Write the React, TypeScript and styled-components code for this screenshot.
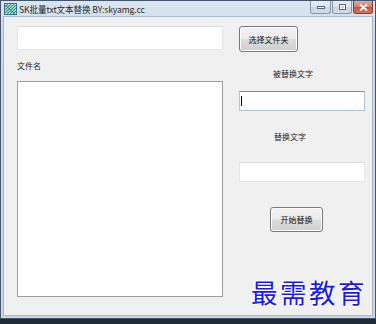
import React from "react";
import styled, { createGlobalStyle } from "styled-components";

const Global = createGlobalStyle`
  html, body { margin: 0; padding: 0; background: #1f2b38; }
  body { font-family: "Noto Sans CJK SC", "Liberation Sans", sans-serif; }
  * { box-sizing: border-box; }
`;

const Win = styled.div`
  width: 376px;
  height: 319px;
  border: 1px solid #46576b;
  background: linear-gradient(#dbe5f1, #cad8ea 40px, #c9d7e9);
  padding: 0 2px 2px 2px;
  display: flex;
  flex-direction: column;
`;

const TitleBar = styled.div`
  height: 15px;
  display: flex;
  align-items: center;
  gap: 2px;
`;

const TitleText = styled.span`
  font-size: 8.6px;
  color: #2a2a2a;
  white-space: nowrap;
  letter-spacing: -0.1px;
  flex: 1;
`;

const Caption = styled.div`
  display: flex;
  align-self: flex-start;
`;

const CapBtn = styled.div<{ $close?: boolean; $w: number }>`
  width: ${(p) => p.$w}px;
  height: 13px;
  border: 1px solid ${(p) => (p.$close ? "#8a3b2f" : "#8495aa")};
  border-top: none;
  border-radius: 0 0 3px 3px;
  background: ${(p) =>
    p.$close
      ? "linear-gradient(#e5a898, #d77a66 50%, #c4503a 51%, #d27a62)"
      : "linear-gradient(#e8eef5, #d9e2ed 50%, #c9d5e3 51%, #d3dde9)"};
  display: flex;
  align-items: center;
  justify-content: center;
  margin-left: 1px;
`;

const Client = styled.div`
  flex: 1;
  background: #f0f0f0;
  border: 1px solid #a9b9cc;
  position: relative;
  display: flex;
  padding: 9px 0 0 13px;
  gap: 16px;
`;

const LeftCol = styled.div`
  width: 206px;
  display: flex;
  flex-direction: column;
`;

const RightCol = styled.div`
  width: 126px;
  display: flex;
  flex-direction: column;
  align-items: flex-start;
`;

const Field = styled.div<{ $h: number; $focus?: boolean; $mt?: number }>`
  width: 100%;
  height: ${(p) => p.$h}px;
  margin-top: ${(p) => p.$mt ?? 0}px;
  background: #fff;
  border: 1px solid ${(p) => (p.$focus ? "#a9c8e6" : "#e3e6ec")};
  border-top-color: ${(p) => (p.$focus ? "#5b97d0" : "#d8dbe2")};
  display: flex;
  align-items: center;
  padding-left: 1px;
`;

const Caret = styled.span`
  width: 1px;
  height: 10px;
  background: #000;
`;

const Label = styled.div<{ $mt: number; $pl?: number }>`
  font-size: 8px;
  line-height: 12px;
  height: 12px;
  color: #1e1e1e;
  margin-top: ${(p) => p.$mt}px;
  padding-left: ${(p) => p.$pl ?? 0}px;
  white-space: nowrap;
`;

const ListBox = styled.div`
  margin-top: 9px;
  height: 216px;
  background: #fff;
  border: 1px solid #9a9ca3;
`;

const Button = styled.div<{ $w: number; $h: number; $mt?: number; $ml?: number }>`
  width: ${(p) => p.$w}px;
  height: ${(p) => p.$h}px;
  margin-top: ${(p) => p.$mt ?? 0}px;
  margin-left: ${(p) => p.$ml ?? 0}px;
  border: 1px solid #7a7a7a;
  border-radius: 3px;
  background: linear-gradient(#f3f3f3, #ebebeb 48%, #dddddd 52%, #cfcfcf);
  box-shadow: inset 0 0 0 1px #fbfbfb;
  font-size: 8px;
  color: #111;
  display: flex;
  align-items: center;
  justify-content: center;
  white-space: nowrap;
`;

const Watermark = styled.div`
  position: absolute;
  left: 247px;
  top: 255px;
  font-family: "Noto Sans CJK SC", sans-serif;
  font-size: 26.5px;
  letter-spacing: 2.5px;
  color: #1a1ae8;
  text-shadow: 0 0 2px #fff, 0 0 2px #fff, 1px 1px 1px #fff, -1px -1px 1px #fff;
  white-space: nowrap;
`;

const AppIcon = () => (
  <svg width="13" height="12" viewBox="0 0 13 12" style={{ marginLeft: 1 }}>
    <rect x="0.5" y="0.5" width="12" height="11" fill="#e9f1ef" stroke="#3f6f8f" />
    <path d="M1 4 L4 1 M1 7 L7 1 M1 10 L10 1 M3 11 L12 2 M6 11 L12 5 M9 11 L12 8" stroke="#2e9a7a" strokeWidth="1.2" />
    <path d="M1 2 L11 11" stroke="#3a6fbf" strokeWidth="0.8" />
  </svg>
);

export default function App() {
  return (
    <>
      <Global />
      <Win>
        <TitleBar>
          <AppIcon />
          <TitleText>SK批量txt文本替换 BY:skyamg.cc</TitleText>
          <Caption>
            <CapBtn $w={21}>
              <svg width="8" height="3"><rect x="0.5" y="0.5" width="7" height="2" fill="#fff" stroke="#56667c" strokeWidth="1" /></svg>
            </CapBtn>
            <CapBtn $w={20}>
              <svg width="7" height="6"><rect x="0.5" y="0.5" width="6" height="5" fill="#fff" stroke="#56667c" strokeWidth="1" /><rect x="2" y="2" width="3" height="2" fill="#c9d5e3" /></svg>
            </CapBtn>
            <CapBtn $w={20} $close>
              <svg width="9" height="7" viewBox="0 0 9 7"><path d="M1 0.5 L8 6.5 M8 0.5 L1 6.5" stroke="#fff" strokeWidth="1.8" /></svg>
            </CapBtn>
          </Caption>
        </TitleBar>
        <Client>
          <LeftCol>
            <Field $h={24} />
            <Label $mt={10}>文件名</Label>
            <ListBox />
          </LeftCol>
          <RightCol>
            <Button $w={59} $h={26}>选择文件夹</Button>
            <Label $mt={16} $pl={34}>被替换文字</Label>
            <Field $h={20} $focus $mt={11}>
              <Caret />
            </Field>
            <Label $mt={20} $pl={35}>替换文字</Label>
            <Field $h={20} $mt={19} />
            <Button $w={53} $h={25} $mt={25} $ml={31}>开始替换</Button>
          </RightCol>
          <Watermark>最需教育</Watermark>
        </Client>
      </Win>
    </>
  );
}
